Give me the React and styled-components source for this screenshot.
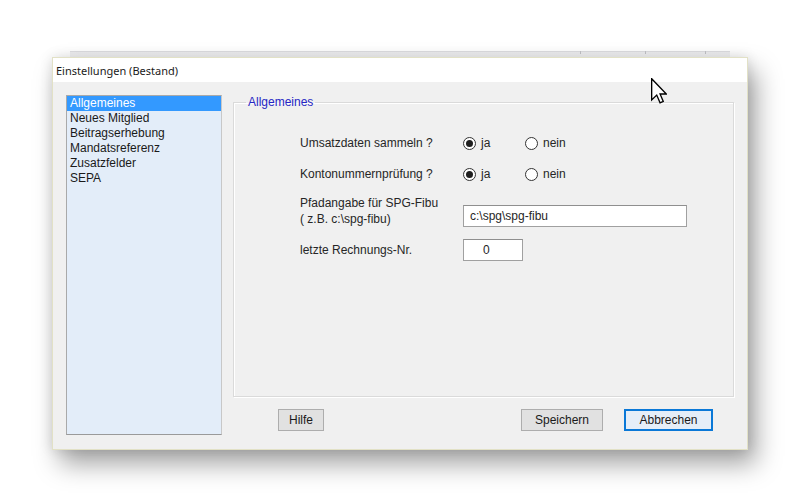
import React from "react";
import styled, { createGlobalStyle } from "styled-components";

const Global = createGlobalStyle`
  html, body { margin: 0; padding: 0; background: #ffffff; }
  body { width: 800px; height: 502px; overflow: hidden; font-family: "Liberation Sans", Arial, sans-serif; }
`;

const Page = styled.div`
  position: relative;
  width: 800px;
  height: 502px;
  padding: 57px 0 0 52px;
  box-sizing: border-box;
`;

const BackWindow = styled.div`
  position: absolute;
  left: 70px;
  top: 51px;
  width: 660px;
  height: 6px;
  border-top: 1px solid #e0e0e3;
  background: linear-gradient(#efeff1, #f7f7f8);
`;

const Tick = styled.span`
  position: absolute;
  top: -1px;
  width: 1px;
  height: 3px;
  background: #c4c4c8;
  left: ${(p) => p.$x}px;
`;

const Dialog = styled.div`
  position: relative;
  width: 696px;
  height: 393px;
  box-sizing: border-box;
  border: 1px solid #e2e1c6;
  background: #f0f0f0;
  display: flex;
  flex-direction: column;
  box-shadow: 8px 14px 24px rgba(0, 0, 0, 0.36), 0 0 12px rgba(0, 0, 0, 0.12);
`;

const TitleBar = styled.div`
  height: 24px;
  background: #ffffff;
  display: flex;
  align-items: center;
  padding-left: 3px;
  font-family: "Noto Sans", "Open Sans", sans-serif;
  font-size: 11px;
  color: #1a1a1a;
`;

const Body = styled.div`
  flex: 1;
  display: flex;
  gap: 11px;
  padding: 13px 13px 14px 13px;
  min-height: 0;
`;

const ListBox = styled.div`
  width: 156px;
  box-sizing: border-box;
  background: #e3edf9;
  border: 1px solid #a9a9a9;
  border-bottom-color: #9a9a9a;
  border-right-color: #c8c8c8;
  padding: 0;
  display: flex;
  flex-direction: column;
`;

const ListItem = styled.div`
  height: 15px;
  line-height: 15px;
  padding-left: 3px;
  font-size: 12px;
  color: ${(p) => (p.$selected ? "#ffffff" : "#1a1a1a")};
  background: ${(p) => (p.$selected ? "#3399ff" : "transparent")};
`;

const Right = styled.div`
  flex: 1;
  display: flex;
  flex-direction: column;
  min-width: 0;
`;

const Group = styled.fieldset`
  flex: 1;
  margin: 0;
  padding: 0;
  border: 1px solid #dadada;
  box-shadow: inset 1px 1px 0 #ffffff, 1px 1px 0 #ffffff;
  min-width: 0;
`;

const Legend = styled.legend`
  margin-left: 12px;
  padding: 0 2px;
  font-size: 12px;
  line-height: 15px;
  color: #2626c4;
`;

const Form = styled.div`
  display: flex;
  flex-direction: column;
  padding: 25px 0 0 66px;
`;

const Row = styled.div`
  display: grid;
  grid-template-columns: 163px auto;
  align-items: ${(p) => p.$align || "center"};
  height: ${(p) => p.$h}px;
  margin-top: ${(p) => p.$mt || 0}px;
`;

const Label = styled.div`
  font-size: 12px;
  line-height: 16px;
  color: #262626;
  align-self: ${(p) => p.$self || "auto"};
`;

const Radios = styled.div`
  display: flex;
  align-items: center;
`;

const RadioOpt = styled.label`
  display: flex;
  align-items: center;
  gap: 5px;
  width: ${(p) => p.$w}px;
  font-size: 12px;
  color: #262626;
`;

const Circle = styled.span`
  width: 13px;
  height: 13px;
  box-sizing: border-box;
  border-radius: 50%;
  border: 1px solid #333333;
  background: #ffffff;
  display: flex;
  align-items: center;
  justify-content: center;
  &::after {
    content: "";
    width: 7px;
    height: 7px;
    border-radius: 50%;
    background: ${(p) => (p.$on ? "#1f1f1f" : "transparent")};
  }
`;

const Input = styled.div`
  width: ${(p) => p.$w}px;
  height: 22px;
  box-sizing: border-box;
  border: 1px solid #a0a0a0;
  border-top-color: #8f8f8f;
  background: #ffffff;
  font-size: 12px;
  line-height: 20px;
  padding-left: ${(p) => p.$pl}px;
  color: #262626;
  align-self: ${(p) => p.$self || "auto"};
`;

const Buttons = styled.div`
  display: flex;
  align-items: center;
  margin: 12px 21px 4px 45px;
  height: 22px;
`;

const Spacer = styled.div`
  flex: 1;
`;

const Button = styled.button`
  height: 22px;
  width: ${(p) => p.$w}px;
  margin-left: ${(p) => p.$ml || 0}px;
  box-sizing: border-box;
  padding: 0;
  font-family: "Liberation Sans", Arial, sans-serif;
  font-size: 12px;
  color: #1a1a1a;
  background: #e1e1e1;
  border: 1px solid #adadad;
  ${(p) =>
    p.$focus &&
    `
    border: 2px solid #0a78d7;
    background: #e5eef8;
  `}
`;

const Cursor = styled.svg`
  position: absolute;
  left: 651px;
  top: 78px;
`;

export default function App() {
  return (
    <Page>
      <Global />
      <BackWindow>
        <Tick $x={510} />
        <Tick $x={575} />
        <Tick $x={635} />
      </BackWindow>
      <Dialog>
        <TitleBar>Einstellungen (Bestand)</TitleBar>
        <Body>
          <ListBox>
            <ListItem $selected>Allgemeines</ListItem>
            <ListItem>Neues Mitglied</ListItem>
            <ListItem>Beitragserhebung</ListItem>
            <ListItem>Mandatsreferenz</ListItem>
            <ListItem>Zusatzfelder</ListItem>
            <ListItem>SEPA</ListItem>
          </ListBox>
          <Right>
            <Group>
              <Legend>Allgemeines</Legend>
              <Form>
                <Row $h={16}>
                  <Label>Umsatzdaten sammeln ?</Label>
                  <Radios>
                    <RadioOpt $w={62}>
                      <Circle $on />
                      ja
                    </RadioOpt>
                    <RadioOpt $w={50}>
                      <Circle />
                      nein
                    </RadioOpt>
                  </Radios>
                </Row>
                <Row $h={16} $mt={15}>
                  <Label>Kontonummernprüfung ?</Label>
                  <Radios>
                    <RadioOpt $w={62}>
                      <Circle $on />
                      ja
                    </RadioOpt>
                    <RadioOpt $w={50}>
                      <Circle />
                      nein
                    </RadioOpt>
                  </Radios>
                </Row>
                <Row $h={32} $mt={13}>
                  <Label $self="start">
                    Pfadangabe für SPG-Fibu
                    <br />( z.B. c:\spg-fibu)
                  </Label>
                  <Input $w={224} $pl={6} $self="end">
                    c:\spg\spg-fibu
                  </Input>
                </Row>
                <Row $h={22} $mt={12}>
                  <Label>letzte Rechnungs-Nr.</Label>
                  <Input $w={60} $pl={19}>
                    0
                  </Input>
                </Row>
              </Form>
            </Group>
            <Buttons>
              <Button $w={46}>Hilfe</Button>
              <Spacer />
              <Button $w={82}>Speichern</Button>
              <Button $w={89} $ml={21} $focus>
                Abbrechen
              </Button>
            </Buttons>
          </Right>
        </Body>
      </Dialog>
      <Cursor width="16" height="26" viewBox="0 0 12 19.5">
        <path
          d="M0.5 0.5 L0.5 16.5 L4.3 12.8 L6.8 18.6 L9.2 17.6 L6.8 12 L11.5 12 Z"
          fill="#ffffff"
          stroke="#000000"
          strokeWidth="1"
          strokeLinejoin="miter"
        />
      </Cursor>
    </Page>
  );
}
